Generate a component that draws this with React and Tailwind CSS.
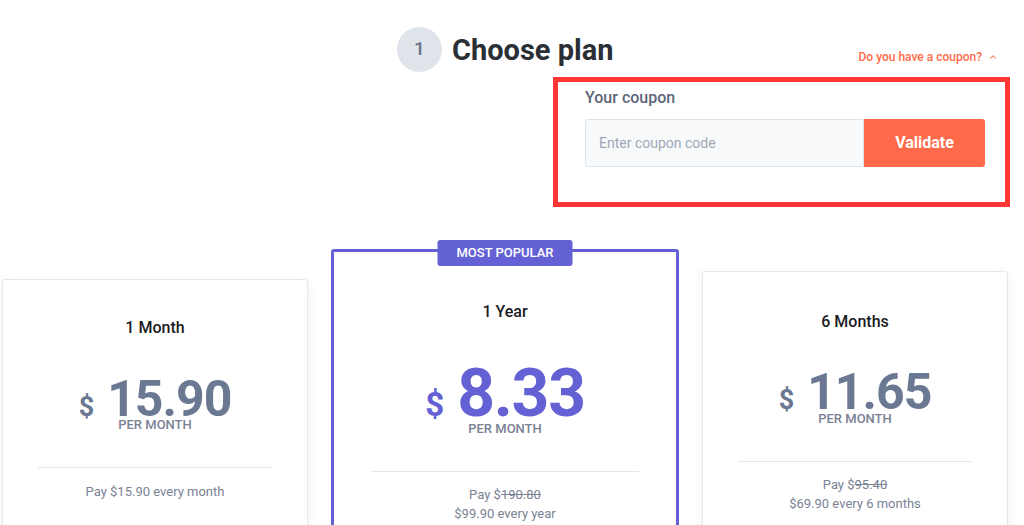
import { ChevronUp } from "lucide-react";

const plans = [
	{
		id: "month",
		title: "1 Month",
		price: "15.90",
		old: null,
		pay: "Pay $15.90 every month",
		wrap: "mt-[30px] w-[306px] h-[280px] border border-[#e6e8ef] shadow-[0_2px_10px_rgba(60,70,110,0.08)]",
		titleGap: "pt-[36px]",
		priceGap: "mt-[41px]",
		perGap: "-mt-[2px]",
		size: "text-[50px]",
		dollar: "text-[27px]",
		color: "text-[#6a7891]",
		divider: "mx-[35px]",
		payGap: "mt-[14px]",
	},
	{
		id: "year",
		title: "1 Year",
		price: "8.33",
		old: "190.80",
		pay: "$99.90 every year",
		wrap: "w-[348px] h-[300px] border-[3px] border-[#6461d4]",
		titleGap: "pt-[48px]",
		priceGap: "mt-[45px]",
		perGap: "mt-[2px]",
		size: "text-[66px]",
		dollar: "text-[33px]",
		color: "text-[#6461d4]",
		divider: "mx-[37px]",
		payGap: "mt-[13px]",
		popular: true,
	},
	{
		id: "six",
		title: "6 Months",
		price: "11.65",
		old: "95.40",
		pay: "$69.90 every 6 months",
		wrap: "mt-[22px] w-[306px] h-[280px] border border-[#e6e8ef] shadow-[0_2px_10px_rgba(60,70,110,0.08)]",
		titleGap: "pt-[38px]",
		priceGap: "mt-[40px]",
		perGap: "-mt-[1px]",
		size: "text-[50px]",
		dollar: "text-[27px]",
		color: "text-[#6a7891]",
		divider: "mx-[35px]",
		payGap: "mt-[13px]",
	},
];

function PlanCard({ plan }) {
	return (
		<div className={`relative shrink-0 rounded-[3px] bg-white ${plan.wrap}`}>
			{plan.popular && (
				<div className="absolute left-1/2 -top-[12px] -translate-x-1/2 w-[135px] h-[26px] rounded-[3px] bg-[#6461d4] flex items-center justify-center text-[13px] font-medium text-white">
					MOST POPULAR
				</div>
			)}
			<div className={`flex flex-col items-center ${plan.titleGap}`}>
				<h3 className="text-[16px] leading-[24px] font-medium text-[#1b1b1f]">
					{plan.title}
				</h3>
				<div className={`flex items-baseline font-bold leading-[0.75] ${plan.color} ${plan.priceGap}`}>
					<span className={`${plan.dollar} mr-[13px]`}>$</span>
					<span className={`${plan.size} tracking-[-0.02em]`}>{plan.price}</span>
				</div>
				<p className={`text-[13px] leading-[16px] font-medium text-[#7a8294] ${plan.perGap}`}>
					PER MONTH
				</p>
			</div>
			<div className={`mt-[34px] h-px bg-[#e4e6eb] ${plan.divider}`} />
			<div className={`text-center text-[13px] leading-[19px] text-[#7a8294] ${plan.payGap}`}>
				{plan.old ? (
					<>
						<p>
							Pay $<span className="line-through">{plan.old}</span>
						</p>
						<p>{plan.pay}</p>
					</>
				) : (
					<p>{plan.pay}</p>
				)}
			</div>
		</div>
	);
}

export default function App() {
	return (
		<div className="h-[525px] overflow-hidden bg-white font-['Roboto','Liberation_Sans',sans-serif]">
			{/* 헤더 */}
			<div className="grid grid-cols-[397px_auto_1fr] pt-[27px]">
				<div />
				<div className="flex items-center gap-[10px]">
					<div className="w-[45px] h-[45px] rounded-full bg-[#dfe3ea] flex items-center justify-center text-[19px] font-medium text-[#6b7585]">
						1
					</div>
					<h1 className="text-[29px] leading-[40px] font-bold text-[#2a2e35]">
						Choose plan
					</h1>
				</div>
				<div className="self-end pb-[7px] pr-[26px] flex justify-end">
					<button className="flex items-center gap-[6px] text-[12px] leading-[16px] font-medium text-[#ff6a48]">
						Do you have a coupon?
						<ChevronUp size={10} strokeWidth={2.5} />
					</button>
				</div>
			</div>

			{/* 쿠폰 */}
			<div className="ml-[553px] mt-[5px] w-[457px] h-[130px] border-[5px] border-[#ff3636] pl-[27px] pt-[4px]">
				<p className="text-[16px] leading-[24px] font-medium text-[#5b6678]">Your coupon</p>
				<div className="mt-[9px] flex h-[48px]">
					<input
						placeholder="Enter coupon code"
						className="w-[279px] h-full rounded-l-[3px] border border-[#dde3ea] bg-[#f7f9fb] px-[13px] text-[14px] text-[#333] placeholder:text-[#a0a8b5] outline-none"
					/>
					<button className="w-[121px] h-full rounded-r-[3px] bg-[#ff6b4a] text-[16px] font-bold text-white">
						Validate
					</button>
				</div>
			</div>

			{/* 요금제 */}
			<div className="mt-[42px] flex items-start gap-[23px] pl-[2px]">
				{plans.map((plan) => (
					<PlanCard key={plan.id} plan={plan} />
				))}
			</div>
		</div>
	);
}
